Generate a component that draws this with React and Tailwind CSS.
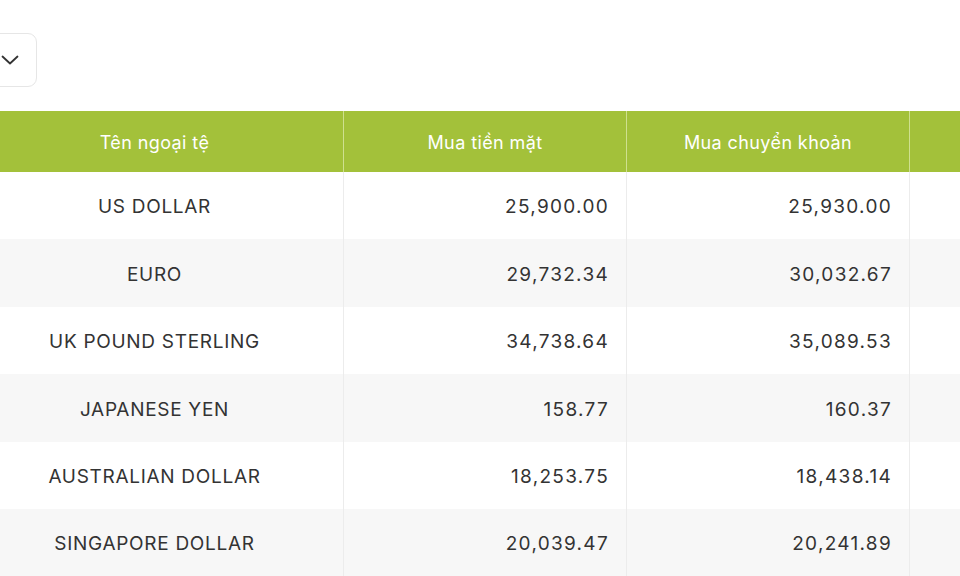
import React from "react";

const rows = [
  ["US DOLLAR", "25,900.00", "25,930.00"],
  ["EURO", "29,732.34", "30,032.67"],
  ["UK POUND STERLING", "34,738.64", "35,089.53"],
  ["JAPANESE YEN", "158.77", "160.37"],
  ["AUSTRALIAN DOLLAR", "18,253.75", "18,438.14"],
  ["SINGAPORE DOLLAR", "20,039.47", "20,241.89"],
];

export default function App() {
  return (
    <div className="w-[960px] h-[576px] overflow-hidden bg-white text-[#333]" style={{ fontFamily: "Inter, 'Noto Sans', sans-serif" }}>
      <div className="pt-[33px] -ml-[20px]">
        <div className="w-[57px] h-[54px] border border-[#e6e6e6] rounded-[9px] flex items-center justify-end pr-[17px]">
          <svg width="18" height="10" viewBox="0 0 18 10" fill="none" stroke="#333" strokeWidth="1.8" strokeLinecap="round" strokeLinejoin="round">
            <path d="M1.5 1.5l7.5 7 7.5-7" />
          </svg>
        </div>
      </div>
      <div className="mt-[24px] -ml-[34px] w-[1200px]">
        <div className="flex h-[61px] bg-[#a3c13a] text-white text-[18px] tracking-[0.4px]">
          <div className="w-[378px] flex items-center justify-center pt-[2px] border-r border-[#cfe08f]">Tên ngoại tệ</div>
          <div className="w-[283px] flex items-center justify-center pt-[2px] border-r border-[#cfe08f]">Mua tiền mặt</div>
          <div className="w-[283px] flex items-center justify-center pt-[2px] border-r border-[#cfe08f]">Mua chuyển khoản</div>
          <div className="flex-1"></div>
        </div>
        {rows.map((r, i) => (
          <div key={i} className={`flex h-[67.4px] text-[19px] ${i % 2 === 1 ? "bg-[#f7f7f7]" : "bg-white"}`}>
            <div className="w-[378px] flex items-center justify-center pt-[4px] border-r border-[#ececec] tracking-[0.7px]">{r[0]}</div>
            <div className="w-[283px] flex items-center justify-end pt-[4px] pr-[17px] border-r border-[#ececec] tracking-[1.3px]">{r[1]}</div>
            <div className="w-[283px] flex items-center justify-end pt-[4px] pr-[17px] border-r border-[#ececec] tracking-[1.3px]">{r[2]}</div>
            <div className="flex-1"></div>
          </div>
        ))}
      </div>
    </div>
  );
}
